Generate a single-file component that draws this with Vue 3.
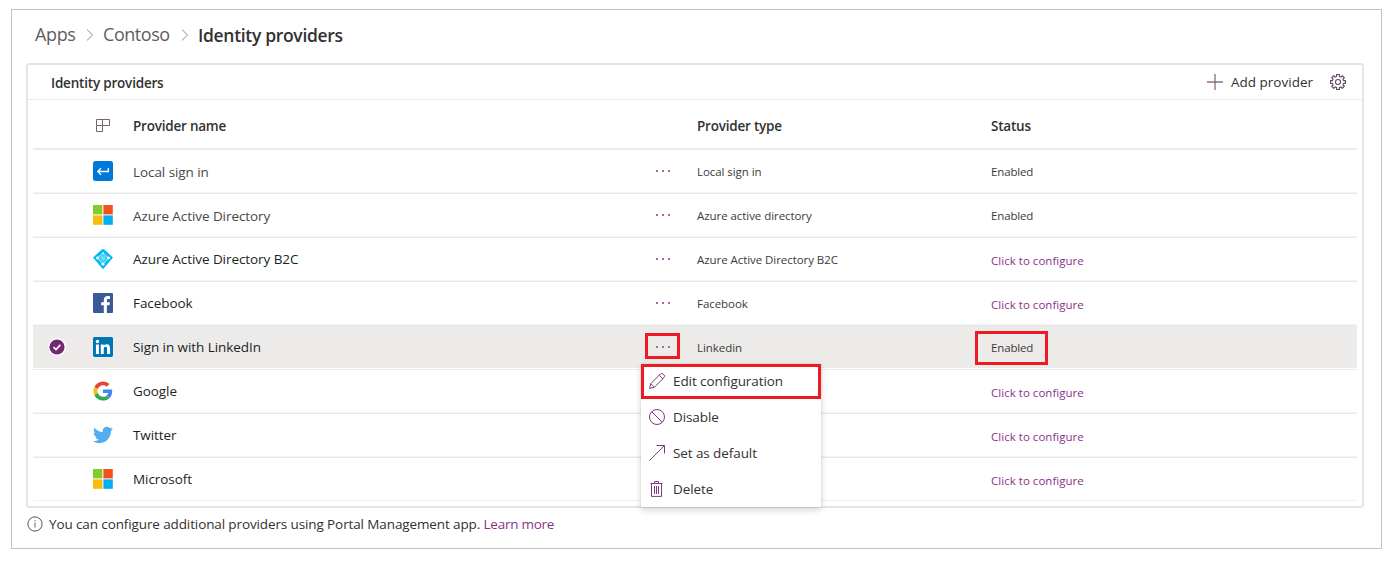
<script setup>
const rows = [
  { icon: 'local', name: 'Local sign in', type: 'Local sign in', on: true, soft: true },
  { icon: 'ms', name: 'Azure Active Directory', type: 'Azure active directory', on: true, soft: true },
  { icon: 'b2c', name: 'Azure Active Directory B2C', type: 'Azure Active Directory B2C' },
  { icon: 'fb', name: 'Facebook', type: 'Facebook' },
  { icon: 'in', name: 'Sign in with LinkedIn', type: 'Linkedin', on: true, selected: true },
  { icon: 'google', name: 'Google' },
  { icon: 'twitter', name: 'Twitter' },
  { icon: 'ms', name: 'Microsoft' },
]
const menu = [
  { icon: 'edit', label: 'Edit configuration' },
  { icon: 'block', label: 'Disable' },
  { icon: 'arrow', label: 'Set as default' },
  { icon: 'trash', label: 'Delete' },
]
// Outline of an eight-toothed gear around (8, 8)
const gear = Array.from({ length: 8 }, (_, i) =>
  [[-14, 5.7], [-11, 7.6], [11, 7.6], [14, 5.7]].map(([d, r]) => {
    const a = ((i * 45 + d) * Math.PI) / 180
    return `${(8 + r * Math.sin(a)).toFixed(2)},${(8 - r * Math.cos(a)).toFixed(2)}`
  }).join(' ')
).join(' ')
</script>

<template>
  <main class="frame">
    <nav class="crumbs">
      <span class="c1">Apps</span>
      <svg width="8" height="12" viewBox="0 0 8 12"><path d="M1 .6 6.6 6 1 11.4" /></svg>
      <span class="c2">Contoso</span>
      <svg width="8" height="12" viewBox="0 0 8 12"><path d="M1 .6 6.6 6 1 11.4" /></svg>
      <span class="c3">Identity providers</span>
    </nav>

    <section class="panel">
      <header class="bar">
        <h2>Identity providers</h2>
        <div class="add">
          <svg width="16" height="16" viewBox="0 0 16 16"><path d="M0 8H16" fill="none" stroke="#8d7a8f" stroke-width="1.6" /><path d="M8 0V16" fill="none" stroke="#8d6a70" stroke-width="1.3" /></svg>
          <span>Add provider</span>
        </div>
        <svg class="gear" width="16" height="16" viewBox="0 0 16 16">
          <g fill="none" stroke="#5c4660" stroke-width="1.1"><polygon :points="gear" stroke-linejoin="round" /><circle cx="8" cy="8" r="2.5" /></g>
        </svg>
      </header>

      <div class="table">
        <div class="row head">
          <span></span>
          <svg width="20" height="20" viewBox="0 0 20 20"><path d="M3.5 4.5h13v6h-13zM3.5 10.5v6h6v-12" fill="none" stroke="#75656f" /></svg>
          <span class="h1">Provider name</span>
          <span></span>
          <span class="h1">Provider type</span>
          <span class="h1">Status</span>
        </div>

        <div v-for="row in rows" :key="row.name" class="row" :class="{ selected: row.selected, soft: row.soft }">
          <span class="check">
            <svg v-if="row.selected" width="18" height="18" viewBox="0 0 18 18">
              <circle cx="9" cy="9" r="9" fill="#fff" /><circle cx="9" cy="9" r="7.6" fill="#742774" />
              <path d="m5.5 9.1 2.5 2.4 4.4-4.7" fill="none" stroke="#fff" stroke-width="1.7" />
            </svg>
          </span>

          <svg v-if="row.icon === 'local'" width="20" height="20" viewBox="0 0 20 20">
            <rect width="20" height="20" rx="2.5" fill="#0078d7" />
            <path d="M15.3 7v3.5H5M8 7.3 4.8 10.5 8 13.7" fill="none" stroke="#fff" stroke-width="1.3" />
          </svg>
          <svg v-else-if="row.icon === 'ms'" width="20" height="20" viewBox="0 0 20 20">
            <path fill="#80cc28" d="M0 0h9.4v9.4H0z" /><path fill="#f4511c" d="M10.4 0h9.4v9.4h-9.4z" />
            <path fill="#fbbc09" d="M0 10.4h9.4v9.4H0z" /><path fill="#00adef" d="M10.4 10.4h9.4v9.4h-9.4z" />
          </svg>
          <svg v-else-if="row.icon === 'b2c'" width="20" height="20" viewBox="0 0 20 20">
            <path fill="#00bcf2" d="M9 .2h2L20 8.6 10.5 19.8h-1L0 8.6z" />
            <path d="M10 4 4.6 9 10 15.3 15.4 9z" fill="#20c4f3" stroke="#c9f2fc" stroke-width="1" />
            <path d="M10 4v11" fill="none" stroke="#6fdaf7" stroke-width="1" />
            <g fill="#fff"><circle cx="10" cy="4.2" r="1" /><circle cx="4.5" cy="9" r="1.4" /><circle cx="15.5" cy="9" r="1.4" /><circle cx="10" cy="15.2" r="1.4" /></g>
            <circle cx="10" cy="9" r="2.6" fill="#6fdaf7" />
          </svg>
          <svg v-else-if="row.icon === 'fb'" width="20" height="20" viewBox="0 0 20 20">
            <rect width="20" height="20" rx="1" fill="#3b5998" />
            <path d="M10.8 20v-7.7H8.2v-3h2.6V7.1c0-2.6 1.6-4 3.9-4 1.1 0 2 .1 2.3.1v2.7h-1.6c-1.3 0-1.5.6-1.5 1.5v1.9h3l-.4 3h-2.6V20z" fill="#fff" />
          </svg>
          <svg v-else-if="row.icon === 'in'" width="20" height="20" viewBox="0 0 24 24">
            <rect width="24" height="24" rx="1.6" fill="#fff" />
            <path fill="#0077b5" d="M20.447 20.452h-3.554v-5.569c0-1.328-.027-3.037-1.852-3.037-1.853 0-2.136 1.445-2.136 2.939v5.667H9.351V9h3.414v1.561h.046c.477-.9 1.637-1.85 3.37-1.85 3.601 0 4.267 2.37 4.267 5.455v6.286zM5.337 7.433a2.062 2.062 0 0 1-2.063-2.065 2.064 2.064 0 1 1 2.063 2.065zm1.782 13.019H3.555V9h3.564v11.452zM22.225 0H1.771C.792 0 0 .774 0 1.729v20.542C0 23.227.792 24 1.771 24h20.451C23.2 24 24 23.227 24 22.271V1.729C24 .774 23.2 0 22.222 0h.003z" />
          </svg>
          <svg v-else-if="row.icon === 'google'" width="20" height="20" viewBox="-1 -1 50 50">
            <path fill="#ea4335" d="M24 9.5c3.54 0 6.71 1.22 9.21 3.6l6.85-6.85C35.9 2.38 30.47 0 24 0 14.62 0 6.51 5.38 2.56 13.22l7.98 6.19C12.43 13.72 17.74 9.5 24 9.5z" />
            <path fill="#4285f4" d="M46.98 24.55c0-1.57-.15-3.09-.38-4.55H24v9.02h12.94c-.58 2.96-2.26 5.48-4.78 7.18l7.73 6c4.51-4.18 7.09-10.36 7.09-17.65z" />
            <path fill="#fbbc05" d="M10.53 28.59c-.48-1.45-.76-2.99-.76-4.59s.27-3.14.76-4.59l-7.98-6.19C.92 16.46 0 20.12 0 24c0 3.88.92 7.54 2.56 10.78l7.97-6.19z" />
            <path fill="#34a853" d="M24 48c6.48 0 11.93-2.13 15.89-5.81l-7.73-6c-2.15 1.45-4.92 2.3-8.16 2.3-6.26 0-11.57-4.22-13.47-9.91l-7.98 6.19C6.51 42.62 14.62 48 24 48z" />
          </svg>
          <svg v-else width="20" height="20" viewBox="0 0 24 24">
            <path fill="#55acee" d="M23.953 4.57a10 10 0 0 1-2.825.775 4.958 4.958 0 0 0 2.163-2.723c-.951.555-2.005.959-3.127 1.184a4.92 4.92 0 0 0-8.384 4.482C7.69 8.095 4.067 6.13 1.64 3.162a4.822 4.822 0 0 0-.666 2.475c0 1.71.87 3.213 2.188 4.096a4.904 4.904 0 0 1-2.228-.616v.06a4.923 4.923 0 0 0 3.946 4.827 4.996 4.996 0 0 1-2.212.085 4.936 4.936 0 0 0 4.604 3.417 9.867 9.867 0 0 1-6.102 2.105c-.39 0-.779-.023-1.17-.067a13.995 13.995 0 0 0 7.557 2.209c9.053 0 13.998-7.496 13.998-13.985 0-.21 0-.42-.015-.63A9.935 9.935 0 0 0 24 4.59z" />
          </svg>

          <span class="name">{{ row.name }}</span>
          <span class="more" :class="{ marked: row.selected }"><i></i><i></i><i></i>
            <div v-if="row.selected" class="menu">
              <div v-for="m in menu" :key="m.icon" class="item">
                <svg width="16" height="16" viewBox="0 0 16 16">
                  <path v-if="m.icon === 'edit'" d="M.6 15.4 1.8 10.6 11.4 1a1.9 1.9 0 0 1 2.7 0l.9.9a1.9 1.9 0 0 1 0 2.7L5.4 14.2zM1.8 10.6 5.4 14.2M10.2 2.2l3.6 3.6" />
                  <path v-else-if="m.icon === 'block'" d="M8 .5a7.5 7.5 0 1 1 0 15 7.5 7.5 0 0 1 0-15zM2.7 2.7l10.6 10.6" />
                  <path v-else-if="m.icon === 'arrow'" d="M.5 15.5l15-15M7.5.5h8v8" />
                  <path v-else d="M1.5 2.5h12M5.5 2.5v-2h4v2M2.5 2.5v12.9h10V2.5M5.5 5v8M7.5 5v8M9.5 5v8" />
                </svg>
                <span>{{ m.label }}</span>
              </div>
            </div>
          </span>
          <span class="type">{{ row.type }}</span>
          <span class="status" :class="{ link: !row.on, boxed: row.selected }">{{ row.on ? 'Enabled' : 'Click to configure' }}</span>
        </div>
      </div>
    </section>

    <footer class="note">
      <svg width="16" height="16" viewBox="0 0 16 16"><circle cx="8" cy="8" r="7.1" fill="none" stroke="#555" /><path d="M8 4v1.2M8 6.6v5" stroke="#6b5a78" /></svg>
      <span>You can configure additional providers using Portal Management app. <a>Learn more</a></span>
    </footer>
  </main>
</template>

<style>
body { background: #fff; }
</style>

<style scoped>
* { box-sizing: border-box; }
.frame {
  width: 1371px; height: 540px; margin: 9px 0 0 11px; border: 1px solid #c1c1c1;
  font-family: "Open Sans", "Noto Sans", sans-serif; font-size: 13.5px; color: #323130;
  white-space: nowrap; display: flow-root;
}
svg { display: block; flex: none; }
.crumbs { display: flex; align-items: center; height: 30px; margin: 9px 0 0 23px; font-size: 18px; color: #605e5c; }
.crumbs svg { fill: none; stroke: #8f8d8b; margin: 1px 9px 0 10px; }
.c1 { width: 41px; letter-spacing: -.35px; }
.c2 { width: 68px; letter-spacing: -.45px; }
.c3 { font-size: 17.5px; font-weight: 600; color: #323130; letter-spacing: -.32px; padding-top: 1px; }

.panel { width: 1338px; height: 445px; margin: 14px 0 0 14px; border: 2px solid #e5e5e5; border-radius: 3px; }
.bar { height: 35px; border-bottom: 1px solid #eaeaea; display: flex; align-items: center; padding: 0 16px 0 23px; }
h2 { margin: 1px auto 0 0; font-size: 13.5px; font-weight: 600; letter-spacing: -.2px; }
.add { display: flex; align-items: center; gap: 8px; margin-right: 17px; }

.table { margin: 0 5px; }
.row {
  display: grid; grid-template-columns: 60px 40px 513px 51px 294px 1fr; align-items: center;
  height: 44px; padding-bottom: 2px; border-bottom: 1px solid #e9e9e9; box-shadow: inset 0 -1px #f4f4f4;
}
.row:last-child { height: 43px; padding-bottom: 1px; border-color: #f1f1f1; box-shadow: none; }
.row.head { height: 50px; border-bottom: 2px solid #eaeaea; padding: 3px 0 0; box-shadow: none; }
.row.head svg { margin-top: -1px; }
.h1 { font-weight: 600; letter-spacing: -.22px; }
.check { padding-left: 15px; }
.name { color: #201f1e; letter-spacing: -.07px; }
.soft .name { color: #494745; padding-top: 2px; }
.type, .status { font-size: 11.5px; letter-spacing: -.06px; color: #3b3a39; padding-top: 2px; }
.status { letter-spacing: -.15px; }
.status.link { color: #8a3289; padding-top: 4px; letter-spacing: .03px; }
.selected { background: #edebe9; background-clip: padding-box; box-shadow: inset 0 -1px #fff; }
.more { position: relative; display: flex; gap: 4px; width: 35px; height: 26px; padding-left: 10px; align-items: center; }
.more i { width: 2px; height: 2px; background: #a56ca4; }
.marked { border: 3px solid #ed1c24; margin: -1px 0 1px -1px; padding: 2px 0 0 8px; }
.boxed { width: 73px; height: 34px; border: 3px solid #ed1c24; margin: 1px 0 -1px -16px; }
.status.boxed { padding: 6px 0 0 13px; }

.menu {
  position: absolute; z-index: 2; left: -7px; top: 28px; width: 180px; height: 143px; background: #fff;
  box-shadow: 0 3px 7px rgba(0, 0, 0, .16), 0 0 2px rgba(0, 0, 0, .12);
}
.item { display: flex; align-items: center; gap: 8px; height: 36px; padding-left: 8px; color: #323130; letter-spacing: -.09px; }
.item:first-child { height: 35px; border: 3px solid #ed1c24; padding-left: 5px; }
.item svg { fill: none; stroke: #813a81; }

.note { display: flex; align-items: center; gap: 6px; margin: 6px 0 0 15px; height: 20px; }
.note span { letter-spacing: -.115px; }
.note a { color: #8a3289; letter-spacing: -.25px; }
</style>
